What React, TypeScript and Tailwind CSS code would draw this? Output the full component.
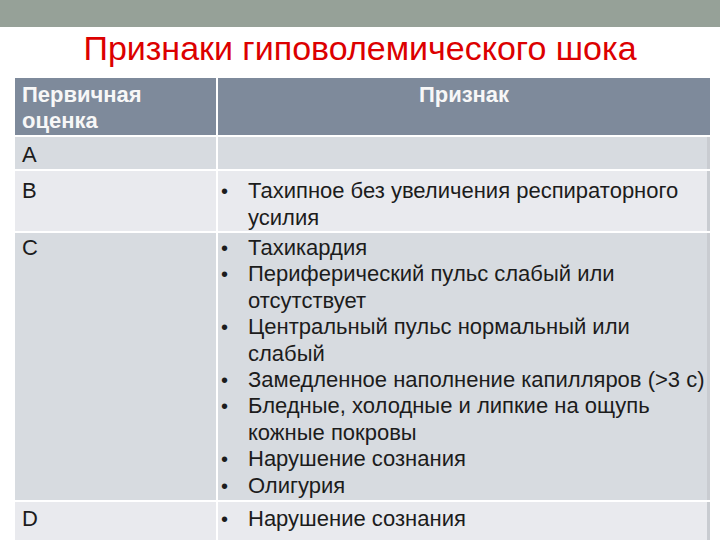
const font = { fontFamily: '"Liberation Sans", Arial, sans-serif' };

type Row = {
  code: string;
  items: string[][];
  bg: string;
  pad: string;
};

const rows: Row[] = [
  { code: "A", items: [], bg: "bg-[#d7dbe0]", pad: "pt-[5px] pb-[1px]" },
  {
    code: "B",
    items: [["Тахипное без увеличения респираторного", "усилия"]],
    bg: "bg-[#e9eaee]",
    pad: "pt-[7px] pb-[0px]",
  },
  {
    code: "C",
    items: [
      ["Тахикардия"],
      ["Периферический пульс слабый или", "отсутствует"],
      ["Центральный пульс нормальный или", "слабый"],
      ["Замедленное наполнение капилляров (>3 с)"],
      ["Бледные, холодные и липкие на ощупь", "кожные покровы"],
      ["Нарушение сознания"],
      ["Олигурия"],
    ],
    bg: "bg-[#d7dbe0]",
    pad: "pt-[2px] pb-[1px]",
  },
  {
    code: "D",
    items: [["Нарушение сознания"]],
    bg: "bg-[#e9eaee]",
    pad: "pt-[4px] pb-[12px]",
  },
];

function Bullets({ items }: { items: string[][] }) {
  return (
    <div className="flex flex-col">
      {items.map((lines, i) => (
        <div key={i} className="flex">
          <span className="w-[30px] shrink-0 pl-[3px] text-[20px]">•</span>
          <div className="flex flex-col">
            {lines.map((l, j) => (
              <span key={j} className="whitespace-nowrap">
                {l}
              </span>
            ))}
          </div>
        </div>
      ))}
    </div>
  );
}

export default function App() {
  return (
    <div className="w-[720px] h-[540px] overflow-hidden bg-white" style={font}>
      <div className="h-[27px] bg-[#96a198]" />
      <h1 className="mt-[4px] text-center text-[34px] leading-[34px] text-[#dc0000]">
        Признаки гиповолемического шока
      </h1>
      <div className="mt-[13px] ml-[15px] w-[695px] grid grid-cols-[201px_492px] gap-[2px] text-[22px] leading-[26.4px] text-[#1c1c1c]">
        <div className="bg-[#7e8a9b] px-[7px] pt-[4px] pb-[0px] font-bold text-[#f7f7f7]">
          <div>Первичная</div>
          <div>оценка</div>
        </div>
        <div className="bg-[#7e8a9b] pt-[4px] text-center font-bold text-[#f7f7f7]">
          Признак
        </div>
        {rows.map((r) => (
          <div key={r.code} className="contents">
            <div className={`${r.bg} ${r.pad} px-[7px]`}>{r.code}</div>
            <div className={`${r.bg} ${r.pad} border-r-[3px] border-[#c9ccd1]`}>
              <Bullets items={r.items} />
            </div>
          </div>
        ))}
      </div>
    </div>
  );
}
